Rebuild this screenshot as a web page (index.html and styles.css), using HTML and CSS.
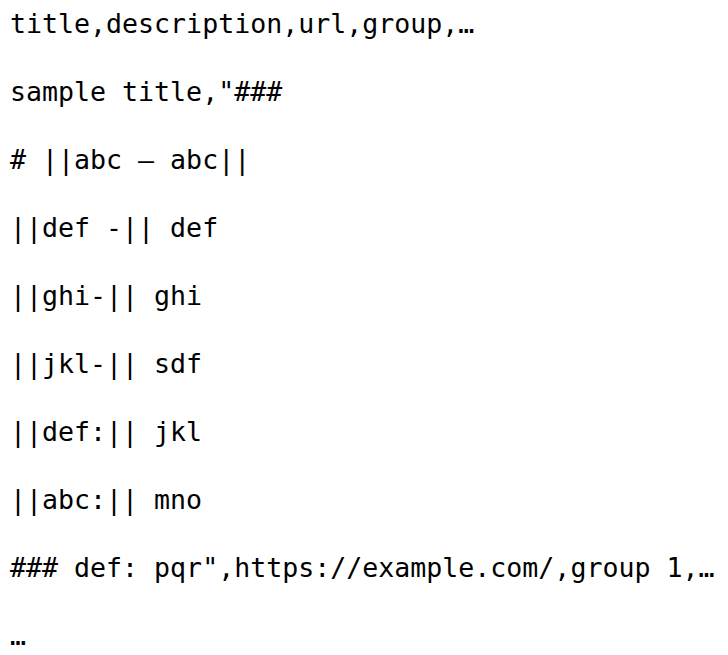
FILE: index.html
```html
<!DOCTYPE html>
<html>
<head>
<meta charset="utf-8">
<link rel="stylesheet" href="styles.css">
</head>
<body>
<div class="csv">
<div class="line">title,description,url,group,…</div>
<div class="line">sample title,"###</div>
<div class="line"># ||abc – abc||</div>
<div class="line">||def -|| def</div>
<div class="line">||ghi-|| ghi</div>
<div class="line">||jkl-|| sdf</div>
<div class="line">||def:|| jkl</div>
<div class="line">||abc:|| mno</div>
<div class="line">### def: pqr",https://example.com/,group 1,…</div>
<div class="line">…</div>
</div>
</body>
</html>
```
FILE: styles.css
```css
html, body {
  margin: 0;
  padding: 0;
  background: #ffffff;
}
.csv {
  display: flex;
  flex-direction: column;
  gap: 34px;
  padding: 7px 0 0 10px;
  font-family: "DejaVu Sans Mono", "Liberation Mono", monospace;
  font-size: 26.6px;
  color: #000000;
}
.line {
  line-height: 34px;
  white-space: pre;
}
```
